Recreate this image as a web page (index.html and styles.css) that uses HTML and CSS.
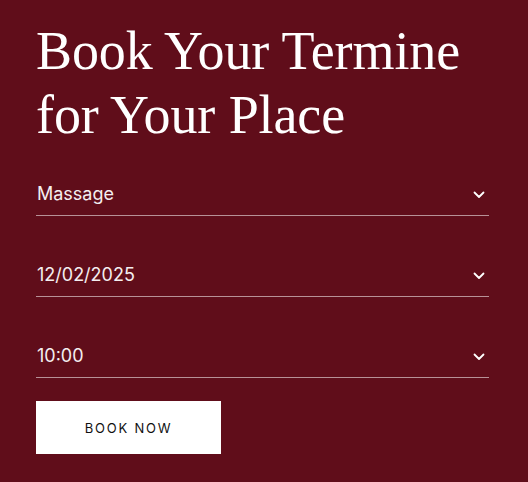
FILE: index.html
```html
<!DOCTYPE html>
<html lang="en">
<head>
<meta charset="utf-8">
<link rel="stylesheet" href="styles.css">
</head>
<body>
<main class="booking">
  <h1 class="title">Book Your Termine<br>for Your Place</h1>
  <form class="form">
    <div class="field"><span class="value">Massage</span><svg class="chev" width="12" height="8" viewBox="0 0 12 8"><path d="M1.5 1.5 L6 6 L10.5 1.5" fill="none" stroke="#fff" stroke-width="1.8" stroke-linecap="round" stroke-linejoin="round"/></svg></div>
    <div class="field"><span class="value">12/02/2025</span><svg class="chev" width="12" height="8" viewBox="0 0 12 8"><path d="M1.5 1.5 L6 6 L10.5 1.5" fill="none" stroke="#fff" stroke-width="1.8" stroke-linecap="round" stroke-linejoin="round"/></svg></div>
    <div class="field"><span class="value">10:00</span><svg class="chev" width="12" height="8" viewBox="0 0 12 8"><path d="M1.5 1.5 L6 6 L10.5 1.5" fill="none" stroke="#fff" stroke-width="1.8" stroke-linecap="round" stroke-linejoin="round"/></svg></div>
    <button class="btn" type="button">BOOK NOW</button>
  </form>
</main>
</body>
</html>
```
FILE: styles.css
```css
html, body {
  margin: 0;
  padding: 0;
  background: #600d1a;
}
.booking {
  padding: 19px 39px 0 36px;
  color: #fff;
}
.title {
  margin: 0;
  font-family: "Liberation Serif", serif;
  font-weight: 400;
  font-size: 54px;
  line-height: 64px;
  letter-spacing: -0.1px;
}
.form {
  display: flex;
  flex-direction: column;
  margin-top: 26px;
}
.field {
  display: flex;
  align-items: center;
  justify-content: space-between;
  height: 42px;
  border-bottom: 1px solid rgba(255,255,255,0.55);
  font-family: Inter, sans-serif;
  font-size: 18px;
  color: #f4eef0;
  margin-bottom: 38px;
  padding: 0 4px 0 1px;
}
.field .value { padding-bottom: 2px; }
.chev { display: block; margin-top: 2px; }
.btn {
  align-self: flex-start;
  margin-top: -15px;
  width: 185px;
  height: 53px;
  background: #fff;
  border: 0;
  font-family: Inter, sans-serif;
  font-size: 13px;
  letter-spacing: 1.8px;
  color: #111;
  cursor: pointer;
}
```
